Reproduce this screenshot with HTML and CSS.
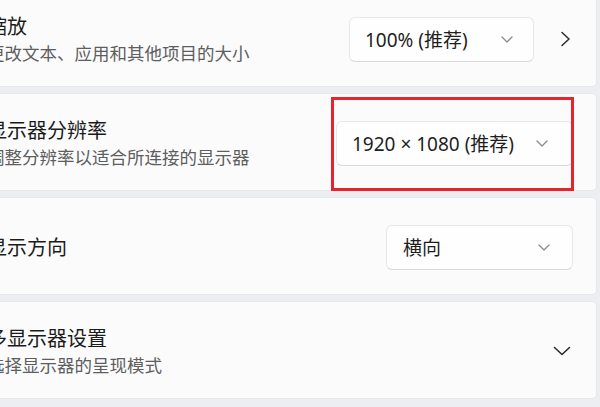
FILE: index.html
```html
<!DOCTYPE html>
<html lang="zh-CN">
<head>
<meta charset="utf-8">
<link rel="stylesheet" href="styles.css">
</head>
<body>
<div class="list">
  <div class="card">
    <div class="text">
      <div class="title">缩放</div>
      <div class="sub">更改文本、应用和其他项目的大小</div>
    </div>
    <div class="controls">
      <div class="dropdown w1"><span>100% (推荐)</span>
        <svg class="chev" width="12" height="7" viewBox="0 0 12 7"><path d="M1 1l5 5 5-5" fill="none" stroke="#8c8c8c" stroke-width="1.3" stroke-linecap="round" stroke-linejoin="round"/></svg>
      </div>
      <svg class="arrow-right" width="16" height="16" viewBox="0 0 16 16"><path d="M5 1.5l7 6.5-7 6.5" fill="none" stroke="#2b2b2b" stroke-width="1.5" stroke-linecap="round" stroke-linejoin="round"/></svg>
    </div>
  </div>
  <div class="card">
    <div class="text">
      <div class="title">显示器分辨率</div>
      <div class="sub">调整分辨率以适合所连接的显示器</div>
    </div>
    <div class="controls">
      <div class="dropdown w2"><span>1920 × 1080 (推荐)</span>
        <svg class="chev" width="12" height="7" viewBox="0 0 12 7"><path d="M1 1l5 5 5-5" fill="none" stroke="#8c8c8c" stroke-width="1.3" stroke-linecap="round" stroke-linejoin="round"/></svg>
      </div>
    </div>
  </div>
  <div class="card">
    <div class="text">
      <div class="title">显示方向</div>
    </div>
    <div class="controls">
      <div class="dropdown w3"><span>横向</span>
        <svg class="chev" width="12" height="7" viewBox="0 0 12 7"><path d="M1 1l5 5 5-5" fill="none" stroke="#8c8c8c" stroke-width="1.3" stroke-linecap="round" stroke-linejoin="round"/></svg>
      </div>
    </div>
  </div>
  <div class="card">
    <div class="text">
      <div class="title">多显示器设置</div>
      <div class="sub">选择显示器的呈现模式</div>
    </div>
    <div class="controls">
      <svg class="arrow-down" width="18" height="10" viewBox="0 0 18 10"><path d="M1.5 1.5l7.5 7 7.5-7" fill="none" stroke="#2b2b2b" stroke-width="1.6" stroke-linecap="round" stroke-linejoin="round"/></svg>
    </div>
  </div>
</div>
<div class="highlight"></div>
</body>
</html>
```
FILE: styles.css
```css
html, body {
  margin: 0;
  padding: 0;
}
body {
  width: 600px;
  height: 407px;
  overflow: hidden;
  background: #eceef2;
  font-family: "Noto Sans", "Noto Sans CJK SC", sans-serif;
  position: relative;
}
.list {
  display: flex;
  flex-direction: column;
  gap: 6px;
  margin: -11px 3px 0 -31px;
}
.card {
  height: 98px;
  box-sizing: border-box;
  background: #fbfbfc;
  border: 1px solid #e6e7eb;
  border-radius: 5px;
  display: flex;
  align-items: center;
  justify-content: space-between;
  padding: 2px 23px 0 17px;
}
.title {
  font-size: 20px;
  line-height: 27px;
  color: #1b1b1b;
}
.sub {
  font-size: 17.5px;
  line-height: 26px;
  color: #5e5e5e;
}
.controls {
  display: flex;
  align-items: center;
  gap: 23px;
}
.dropdown {
  height: 45px;
  box-sizing: border-box;
  background: #fefefe;
  border: 1px solid #e8e8e8;
  border-bottom-color: #d9d9d9;
  border-radius: 6px;
  display: flex;
  align-items: center;
  padding: 0 20px 0 15px;
  font-size: 19px;
  color: #1e1e1e;
}
.dropdown .chev {
  margin-left: auto;
}
.w1 { width: 185px; }
.w2 { width: 237px; padding-right: 24px; }
.w3 { width: 187px; padding-left: 16px; padding-right: 22px; }
.arrow-right {
  display: block;
}
.arrow-down {
  display: block;
  margin-right: 2px;
}
.highlight {
  position: absolute;
  left: 331px;
  top: 97px;
  width: 243px;
  height: 94px;
  box-sizing: border-box;
  border: 3px solid #e8232b;
}
```
